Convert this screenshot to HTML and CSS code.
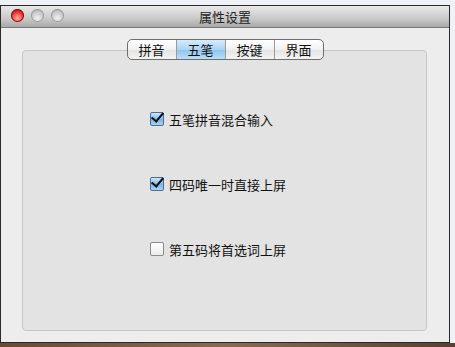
FILE: index.html
```html
<!DOCTYPE html>
<html lang="zh-CN">
<head>
  <meta charset="UTF-8">
  <title>属性设置</title>
  <link rel="stylesheet" href="styles.css">
</head>
<body>
  <div class="window">
    <!-- Title bar -->
    <div class="titlebar">
      <div class="lights">
        <span class="light close"></span>
        <span class="light"></span>
        <span class="light"></span>
      </div>
      <div class="title">属性设置</div>
    </div>

    <!-- Content -->
    <div class="content">
      <div class="tabs">
        <div class="tab">拼音</div>
        <div class="tab active">五笔</div>
        <div class="tab">按键</div>
        <div class="tab">界面</div>
      </div>
      <div class="group">
        <label class="option"><span class="box checked"></span>五笔拼音混合输入</label>
        <label class="option"><span class="box checked"></span>四码唯一时直接上屏</label>
        <label class="option"><span class="box"></span>第五码将首选词上屏</label>
      </div>
    </div>
  </div>
  <div class="desk"></div>
</body>
</html>
```

FILE: styles.css
```css
body {
  margin: 0;
  background: #eef2f6;
  font-family: "Noto Sans CJK SC", "Noto Sans", sans-serif;
  width: 455px;
  height: 347px;
  overflow: hidden;
}

.window {
  margin-top: 5px;
  width: 448px;
  height: 336px;
  border: 1px solid #2a2a2a;
  background: #ededed;
  display: flex;
  flex-direction: column;
}

.titlebar {
  position: relative;
  height: 21px;
  background: linear-gradient(to bottom, #e9e9e9, #c9c9c9 60%, #a9a9a9);
  border-bottom: 1px solid #7a7a7a;
  display: flex;
  align-items: center;
  justify-content: center;
}

.lights {
  position: absolute;
  left: 10px;
  top: 3px;
  display: flex;
  gap: 7px;
}

.light {
  width: 13px;
  height: 13px;
  border-radius: 50%;
  background: radial-gradient(circle at 50% 70%, #f2f2f2, #bdbdbd 70%);
  box-shadow: inset 0 0 0 1px #9a9a9a;
}

.light.close {
  background: radial-gradient(circle at 50% 70%, #ffb3a8, #e8322b 55%, #9c0e0e);
  box-shadow: inset 0 0 0 1px #8a1010;
}

.title {
  font-size: 13px;
  color: #222;
}

.content {
  flex: 1;
  display: flex;
  flex-direction: column;
  padding: 11px 22px 11px 21px;
}

.tabs {
  align-self: center;
  display: flex;
  height: 19px;
  border: 1px solid #6e6e6e;
  border-radius: 5px;
  overflow: hidden;
  background: linear-gradient(to bottom, #ffffff, #f1f1f1 50%, #e3e3e3 51%, #f4f4f4);
  position: relative;
  z-index: 1;
  margin-left: 1px;
}

.tab {
  width: 48px;
  font-size: 13px;
  line-height: 19px;
  text-align: center;
  color: #111;
  border-left: 1px solid #9a9a9a;
}

.tab:first-child {
  border-left: 0;
}

.tab.active {
  background: linear-gradient(to bottom, #d6ecfb, #a9d4f3 50%, #8cc3ed 51%, #b9e0f9);
}

.group {
  flex: 1;
  margin-top: -10px;
  background: #e3e3e3;
  border: 1px solid #c6c6c6;
  border-radius: 4px;
  display: flex;
  flex-direction: column;
  gap: 47px;
  padding: 59px 0 0 127px;
}

.option {
  display: flex;
  align-items: center;
  gap: 5px;
  font-size: 13px;
  color: #111;
  height: 18px;
}

.box {
  width: 12px;
  height: 12px;
  border: 1px solid #8a8a8a;
  border-radius: 2px;
  background: linear-gradient(to bottom, #ffffff, #ececec);
  position: relative;
}

.box.checked {
  background: linear-gradient(to bottom, #cfe6fa, #7fb6e8 55%, #a9d2f4);
  border-color: #4a6f96;
}

.box.checked::after {
  content: "";
  position: absolute;
  left: 3px;
  top: -3px;
  width: 5px;
  height: 10px;
  border: solid #111;
  border-width: 0 2px 2px 0;
  transform: rotate(40deg);
}

.desk {
  height: 4px;
  background: linear-gradient(to right, #6b4a34, #8a6a50, #5a4030);
}
```
